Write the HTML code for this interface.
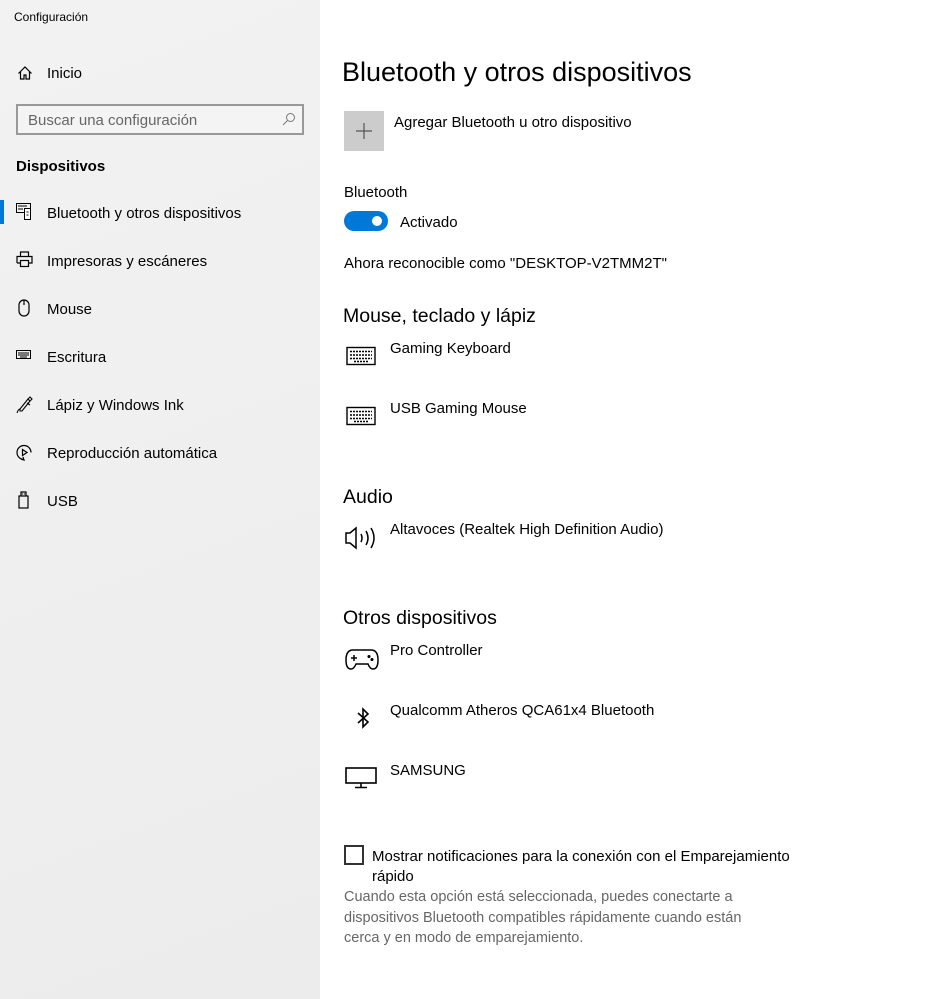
<!DOCTYPE html>
<html><head><meta charset="utf-8"><style>
*{margin:0;padding:0;box-sizing:border-box}
body{width:930px;height:999px;overflow:hidden;background:#fff;font-family:"Liberation Sans",sans-serif;color:#000;position:relative}
.side{position:absolute;left:0;top:0;width:320px;height:999px;background:linear-gradient(160deg,#f2f2f2,#ececec)}
.a{position:absolute;white-space:nowrap}
.t15{font-size:15px;margin-top:1px}
.h{font-size:19.5px;margin-top:1px}
svg{position:absolute;fill:none;stroke:#000;stroke-width:1.2}
</style></head><body>
<div class="side">
<div class="a" style="left:14px;top:10px;font-size:12px">Configuración</div>
<svg style="left:17px;top:65px" width="16" height="16" viewBox="0 0 16 16"><path d="M1.5 8.5L8 2l6.5 6.5M3.5 7v7h3.5v-4h2v4h3.5V7"/></svg>
<div class="a t15" style="left:47px;top:64px">Inicio</div>
<div class="a" style="left:16px;top:104px;width:288px;height:31px;border:2px solid #999;background:#f4f4f4"></div>
<div class="a t15" style="left:28px;top:111px;color:#666">Buscar una configuración</div>
<svg style="left:282px;top:112px;stroke:#777;stroke-width:1" width="14" height="14" viewBox="0 0 14 14"><circle cx="8.5" cy="5.5" r="4"/><path d="M5.5 8.5L1 13"/></svg>
<div class="a t15" style="left:16px;top:157px;font-weight:bold">Dispositivos</div>
<div class="a" style="left:0;top:200px;width:4px;height:24px;background:#0078d7"></div>
<svg style="left:16px;top:203px;stroke-width:1" width="17" height="17" viewBox="0 0 17 17"><rect x="0.5" y="0.5" width="14" height="9"/><rect x="8.5" y="5.5" width="6" height="11" fill="#fff"/><path d="M2 3h9M2 6h5M10.5 9h2M10.5 12h2"/></svg>
<div class="a t15" style="left:47px;top:204px">Bluetooth y otros dispositivos</div>
<svg style="left:16px;top:251px;stroke-width:1.2" width="17" height="17" viewBox="0 0 17 17"><path d="M4.5 5V1h8v4M1 12V5.5h15V12h-3.5M4.5 12H1"/><rect x="4.5" y="9.5" width="8" height="6"/></svg>
<div class="a t15" style="left:47px;top:252px">Impresoras y escáneres</div>
<svg style="left:17px;top:299px;stroke-width:1.2" width="14" height="18" viewBox="0 0 14 18"><rect x="2" y="1" width="10" height="16" rx="5"/><path d="M7 1v5"/></svg>
<div class="a t15" style="left:47px;top:300px">Mouse</div>
<svg style="left:16px;top:349px;stroke-width:1" width="16" height="12" viewBox="0 0 16 12"><rect x="0.5" y="1.5" width="14" height="8"/><path d="M2 4h11M2 6h11M4 8h7"/></svg>
<div class="a t15" style="left:47px;top:348px">Escritura</div>
<svg style="left:16px;top:396px;stroke-width:1.1" width="17" height="18" viewBox="0 0 17 18"><path d="M1 17c1-3 2-4 3-4M4 13l8-10 2 2-8 10-2 0zM12 3l2-2 2 2-2 2M11 7l3 2"/></svg>
<div class="a t15" style="left:47px;top:396px">Lápiz y Windows Ink</div>
<svg style="left:16px;top:444px;stroke-width:1.2" width="17" height="17" viewBox="0 0 17 17"><path d="M8 15.5a7 7 0 1 1 7-7"/><path d="M6.5 5.5v6l4.5-3z"/><path d="M5 15l3 1-1 -3"/></svg>
<div class="a t15" style="left:47px;top:444px">Reproducción automática</div>
<svg style="left:18px;top:491px;stroke-width:1.2" width="12" height="18" viewBox="0 0 12 18"><rect x="1" y="5" width="9" height="12"/><path d="M3 5V1h5v4M4.5 2.5v1M6.5 2.5v1"/></svg>
<div class="a t15" style="left:47px;top:492px">USB</div>
</div>

<div class="a" style="left:342px;top:57px;font-size:27px">Bluetooth y otros dispositivos</div>
<div class="a" style="left:344px;top:111px;width:40px;height:40px;background:#ccc"></div>
<svg style="left:355px;top:122px;stroke:#555;stroke-width:1.2" width="18" height="18" viewBox="0 0 18 18"><path d="M9 1v16M1 9h16"/></svg>
<div class="a t15" style="left:394px;top:113px">Agregar Bluetooth u otro dispositivo</div>
<div class="a t15" style="left:344px;top:183px">Bluetooth</div>
<div class="a" style="left:344px;top:211px;width:44px;height:20px;border-radius:10px;background:#0078d7"></div>
<div class="a" style="left:372px;top:216px;width:10px;height:10px;border-radius:5px;background:#fff"></div>
<div class="a t15" style="left:400px;top:213px">Activado</div>
<div class="a t15" style="left:344px;top:254px">Ahora reconocible como "DESKTOP-V2TMM2T"</div>

<div class="a h" style="left:343px;top:304px">Mouse, teclado y lápiz</div>
<svg style="left:346px;top:346px;stroke-width:1.4" width="30" height="20" viewBox="0 0 30 20"><rect x="1" y="1.5" width="28" height="17"/><path d="M4 5.5h22M4 9h22M4 12.5h22M8 15.5h14" stroke-dasharray="2 1"/></svg>
<div class="a t15" style="left:390px;top:339px">Gaming Keyboard</div>
<svg style="left:346px;top:406px;stroke-width:1.4" width="30" height="20" viewBox="0 0 30 20"><rect x="1" y="1.5" width="28" height="17"/><path d="M4 5.5h22M4 9h22M4 12.5h22M8 15.5h14" stroke-dasharray="2 1"/></svg>
<div class="a t15" style="left:390px;top:399px">USB Gaming Mouse</div>

<div class="a h" style="left:343px;top:485px">Audio</div>
<svg style="left:345px;top:523px;stroke-width:1.5" width="34" height="30" viewBox="0 0 34 30"><path d="M1 10h4l6-5v20l-6-5H1z"/><path d="M16 11q2 4 0 8M21 8q4 7 0 14M26 5q6 10 0 20"/></svg>
<div class="a t15" style="left:390px;top:520px">Altavoces (Realtek High Definition Audio)</div>

<div class="a h" style="left:343px;top:606px">Otros dispositivos</div>
<svg style="left:345px;top:648px;stroke-width:1.5" width="34" height="22" viewBox="0 0 34 22"><path d="M8 2h18q7 0 7 10 0 9-5 9-3 0-5-5H11q-2 5-5 5-5 0-5-9 0-10 7-10z"/><path d="M6 10h6M9 7v6"/><circle cx="24" cy="8.5" r=".8" fill="#000"/><circle cx="27" cy="11.5" r=".8" fill="#000"/></svg>
<div class="a t15" style="left:390px;top:641px">Pro Controller</div>
<svg style="left:356px;top:706px;stroke-width:1.6" width="14" height="24" viewBox="0 0 14 24"><path d="M2 7l10 9-5 5V3l5 5-10 9"/></svg>
<div class="a t15" style="left:390px;top:701px">Qualcomm Atheros QCA61x4 Bluetooth</div>
<svg style="left:345px;top:767px;stroke-width:1.6" width="32" height="22" viewBox="0 0 32 22"><rect x="1" y="1" width="30" height="15"/><path d="M16 16v4M10 20.5h12"/></svg>
<div class="a t15" style="left:390px;top:761px">SAMSUNG</div>

<div class="a" style="left:344px;top:845px;width:20px;height:20px;border:2px solid #333"></div>
<div class="a t15" style="left:372px;top:846px;line-height:20px;white-space:normal;width:430px">Mostrar notificaciones para la conexión con el Emparejamiento rápido</div>
<div class="a" style="left:344px;top:887px;font-size:14.5px;line-height:20.5px;color:#666;white-space:normal;width:430px">Cuando esta opción está seleccionada, puedes conectarte a dispositivos Bluetooth compatibles rápidamente cuando están cerca y en modo de emparejamiento.</div>
</body></html>
